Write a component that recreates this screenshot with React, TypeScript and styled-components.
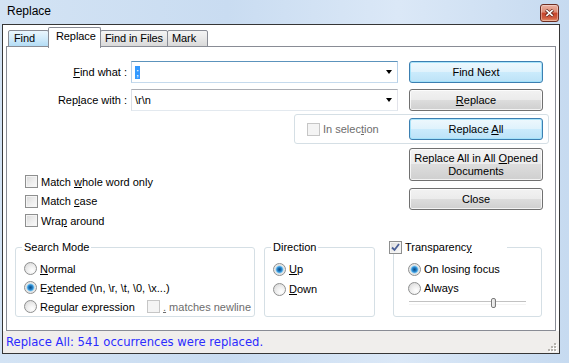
import React from 'react';
import styled, { createGlobalStyle } from 'styled-components';

const GlobalStyle = createGlobalStyle`
  html, body {
    margin: 0;
    padding: 0;
    background: #fff;
  }
  body {
    font-family: "Liberation Sans", Arial, sans-serif;
    font-size: 11px;
    color: #000;
  }
  * {
    box-sizing: border-box;
  }
`;

const Window = styled.div`
  width: 569px;
  height: 363px;
  display: flex;
  flex-direction: column;
  overflow: hidden;
  background: linear-gradient(90deg, #d3e3f4 0%, #c9dcf1 40%, #dbe8f7 70%, #c6daf0 100%);
`;

const TitleBar = styled.div`
  height: 24px;
  flex: none;
  display: flex;
  justify-content: space-between;
  padding: 0 10px 0 7px;
`;

const Title = styled.span`
  font-size: 12px;
  line-height: 23px;
  color: #000;
`;

const CloseButton = styled.div`
  width: 19px;
  height: 18px;
  margin-top: 4px;
  border: 1px solid #6d2e22;
  border-radius: 3px;
  display: flex;
  align-items: center;
  justify-content: center;
  background: linear-gradient(#eab1a2 0%, #dd8a73 45%, #c7442a 50%, #cf5b3e 80%, #e5946f 100%);
  box-shadow: inset 0 0 0 1px rgba(255, 255, 255, 0.35);
`;

const Client = styled.div`
  height: 330px;
  flex: none;
  margin: 0 9px 0 2px;
  border: 1px solid #363636;
  background: #fff;
  display: flex;
  flex-direction: column;
`;

const TabStrip = styled.div`
  height: 22px;
  flex: none;
  display: flex;
  align-items: flex-end;
  padding-left: 5px;
`;

const Tab = styled.div<{ $active?: boolean; $hover?: boolean; $w: number; $pad: number }>`
  position: relative;
  z-index: ${p => (p.$active ? 2 : 1)};
  width: ${p => p.$w}px;
  height: ${p => (p.$active ? 21 : 17)}px;
  margin-left: -1px;
  margin-bottom: ${p => (p.$active ? -1 : 0)}px;
  padding: ${p => (p.$active ? '2px' : '1px')} 0 0 ${p => p.$pad}px;
  border: 1px solid #898c95;
  border-bottom: ${p => (p.$active ? 'none' : '1px solid #898c95')};
  border-radius: 2px 2px 0 0;
  line-height: 13px;
  letter-spacing: -0.1px;
  white-space: nowrap;
  background: ${p =>
    p.$active
      ? '#fff'
      : p.$hover
        ? 'linear-gradient(#eaf6fd 0%, #cfe9f9 55%, #b3dcf5 100%)'
        : 'linear-gradient(#f4f4f4 0%, #e8e8e8 50%, #d9d9d9 100%)'};

  &:first-child {
    margin-left: 0;
  }
`;

const Panel = styled.div`
  width: 550px;
  height: 285px;
  flex: none;
  margin: -1px 0 0 3px;
  border: 1px solid #898c95;
  background: #fff;
  display: flex;
  flex-direction: column;
  padding-top: 14px;
`;

const FieldRow = styled.div<{ $top?: number }>`
  display: flex;
  align-items: center;
  height: 22px;
  margin-top: ${p => p.$top ?? 0}px;
`;

const FieldLabel = styled.span`
  width: 120px;
  text-align: right;
  white-space: nowrap;
`;

const Combo = styled.div<{ $focused?: boolean }>`
  width: 267px;
  height: 22px;
  margin-left: 4px;
  display: flex;
  align-items: center;
  padding-left: 3px;
  border: 1px solid;
  border-color: ${p =>
    p.$focused ? '#5c93bc #b5cfe7 #c5daed #b5cfe7' : '#abadb3 #e2e3ea #e3e9ef #dbdfe6'};
  background: #fff;
`;

const ComboText = styled.span`
  flex: 1;
  white-space: nowrap;
  line-height: 13px;
`;

const Selected = styled.span`
  display: inline-block;
  padding: 0 1px;
  background: #3399ff;
  color: #fff;
  line-height: 13px;
`;

const DropArrow = styled.span`
  width: 0;
  height: 0;
  margin-right: 5px;
  border-left: 3.5px solid transparent;
  border-right: 3.5px solid transparent;
  border-top: 4px solid #000;
`;

const PushButton = styled.div<{ $default?: boolean; $tall?: boolean; $left?: number }>`
  width: 134px;
  height: ${p => (p.$tall ? 33 : 22)}px;
  flex: none;
  margin-left: ${p => p.$left ?? 0}px;
  display: flex;
  align-items: center;
  justify-content: center;
  text-align: center;
  line-height: 13px;
  white-space: nowrap;
  border: 1px solid ${p => (p.$default ? '#3c7fb1' : '#707070')};
  border-radius: 3px;
  background: ${p =>
    p.$default
      ? 'linear-gradient(#eef8fd 0%, #dff2fc 50%, #cbebfc 50%, #bce2f7 100%)'
      : 'linear-gradient(#f2f2f2 0%, #ebebeb 50%, #dddddd 50%, #cfcfcf 100%)'};
  box-shadow: inset 0 0 0 1px ${p => (p.$default ? 'rgba(160, 225, 250, 0.9)' : 'rgba(255, 255, 255, 0.75)')};
`;

const SelectionFrame = styled.div`
  width: 255px;
  height: 30px;
  margin: 3px 0 0 287px;
  display: flex;
  align-items: center;
  padding: 0 5px 0 12px;
  border: 1px solid #d5dfe5;
  border-radius: 3px;
`;

const MiddleRow = styled.div`
  height: 99px;
  margin-top: 4px;
  display: flex;
`;

const OptionColumn = styled.div`
  width: 402px;
  padding: 24px 0 0 18px;
  display: flex;
  flex-direction: column;
`;

const ButtonColumn = styled.div`
  display: flex;
  flex-direction: column;
  gap: 7px;
`;

const Option = styled.div<{ $h?: number; $w?: number; $disabled?: boolean }>`
  height: ${p => p.$h ?? 19.5}px;
  width: ${p => (p.$w ? `${p.$w}px` : 'auto')};
  flex: none;
  display: flex;
  align-items: center;
  gap: 3px;
  white-space: nowrap;
  color: ${p => (p.$disabled ? '#6d6d6d' : '#000')};
`;

const CheckBox = styled.span<{ $disabled?: boolean }>`
  width: 13px;
  height: 13px;
  flex: none;
  display: inline-flex;
  align-items: center;
  justify-content: center;
  border: 1px solid ${p => (p.$disabled ? '#c6c6c6' : '#8e8f8f')};
  background: ${p =>
    p.$disabled ? '#f4f4f4' : 'linear-gradient(135deg, #d8d8d8 0%, #eeeeee 55%, #fbfbfb 100%)'};
  box-shadow: inset 0 0 0 1px #f4f4f4;
`;

const Radio = styled.span<{ $checked?: boolean }>`
  width: 13px;
  height: 13px;
  flex: none;
  border-radius: 50%;
  border: 1px solid #8e8f8f;
  background: ${p =>
    p.$checked
      ? 'radial-gradient(circle at 50% 50%, #0d4f86 0px, #1b6fb3 1.6px, #3d9ade 2.8px, #8fd0f3 3.6px, #e4e4e4 4.3px, #f7f7f7 100%)'
      : 'radial-gradient(circle at 65% 70%, #ffffff 0%, #eeeeee 45%, #d2d2d2 100%)'};
`;

const Key = styled.u`
  text-decoration: underline;
  text-underline-offset: 1px;
`;

const GroupRow = styled.div`
  display: flex;
  align-items: flex-start;
  padding-left: 8px;
`;

const GroupBox = styled.div<{ $w: number; $left?: number; $pt: number; $pl: number }>`
  position: relative;
  width: ${p => p.$w}px;
  height: 70px;
  margin-left: ${p => p.$left ?? 0}px;
  padding: ${p => p.$pt}px 0 0 ${p => p.$pl}px;
  border: 1px solid #d5dfe5;
  border-radius: 3px;
  display: flex;
  flex-direction: column;
`;

const Caption = styled.div<{ $left?: number; $w?: number }>`
  position: absolute;
  top: -7px;
  left: ${p => p.$left ?? 6}px;
  width: ${p => (p.$w ? `${p.$w}px` : 'auto')};
  height: 13px;
  padding: 0 2px;
  display: flex;
  align-items: center;
  gap: 3px;
  line-height: 13px;
  white-space: nowrap;
  background: #fff;
`;

const SliderTrack = styled.div`
  position: relative;
  width: 117px;
  height: 10px;
  margin-left: 1px;
  display: flex;
  align-items: center;

  &::before {
    content: '';
    width: 100%;
    height: 2px;
    border-top: 1px solid #c2c2c2;
    border-bottom: 1px solid #f4f4f4;
  }
`;

const SliderThumb = styled.span`
  position: absolute;
  top: 0;
  left: 82px;
  width: 5px;
  height: 10px;
  border: 1px solid #7a7a7a;
  border-radius: 2px;
  background: linear-gradient(90deg, #f4f4f4, #dcdcdc);
`;

const StatusBar = styled.div`
  height: 22px;
  flex: none;
  display: flex;
  align-items: center;
  justify-content: space-between;
  padding: 0 2px 0 3px;
  background: #f0eeec;
`;

const StatusText = styled.span`
  font-family: "DejaVu Sans", Verdana, sans-serif;
  font-size: 11.6px;
  color: #2b2bff;
  white-space: nowrap;
`;

const Grip = () => (
  <svg width="10" height="10" viewBox="0 0 10 10" style={{ alignSelf: 'flex-end', marginBottom: 1 }}>
    {[
      [7, 1], [7, 4], [4, 4], [7, 7], [4, 7], [1, 7],
    ].map(([x, y]) => (
      <g key={`${x}-${y}`}>
        <rect x={x + 1} y={y + 1} width="2" height="2" fill="#ffffff" />
        <rect x={x} y={y} width="2" height="2" fill="#b5b2ad" />
      </g>
    ))}
  </svg>
);

const Check = () => (
  <svg width="9" height="9" viewBox="0 0 9 9">
    <path d="M1 4.5 L3.5 7 L8 1" fill="none" stroke="#4a5f97" strokeWidth="1.8" />
  </svg>
);

export default function App() {
  return (
    <>
      <GlobalStyle />
      <Window>
        <TitleBar>
          <Title>Replace</Title>
          <CloseButton>
            <svg width="9" height="8" viewBox="0 0 9 8">
              <path d="M1 1 L8 7 M8 1 L1 7" stroke="#5a1f14" strokeWidth="3" />
              <path d="M1.3 1.2 L7.7 6.8 M7.7 1.2 L1.3 6.8" stroke="#fff" strokeWidth="1.6" />
            </svg>
          </CloseButton>
        </TitleBar>

        <Client>
          <TabStrip>
            <Tab $w={41} $pad={5} $hover>Find</Tab>
            <Tab $w={53} $pad={7} $active>Replace</Tab>
            <Tab $w={68} $pad={4}>Find in Files</Tab>
            <Tab $w={41} $pad={4}>Mark</Tab>
          </TabStrip>

          <Panel>
            <FieldRow>
              <FieldLabel>
                <Key>F</Key>ind what :
              </FieldLabel>
              <Combo $focused>
                <ComboText>
                  <Selected>;</Selected>
                </ComboText>
                <DropArrow />
              </Combo>
              <PushButton $default $left={11}>Find Next</PushButton>
            </FieldRow>

            <FieldRow $top={6}>
              <FieldLabel>
                Rep<Key>l</Key>ace with :
              </FieldLabel>
              <Combo>
                <ComboText>\r\n</ComboText>
                <DropArrow />
              </Combo>
              <PushButton $left={11}>
                <span>
                  <Key>R</Key>eplace
                </span>
              </PushButton>
            </FieldRow>

            <SelectionFrame>
              <Option $disabled>
                <CheckBox $disabled />
                <span>
                  In selec<Key>t</Key>ion
                </span>
              </Option>
              <PushButton $default style={{ marginLeft: 'auto' }}>
                <span>
                  Replace <Key>A</Key>ll
                </span>
              </PushButton>
            </SelectionFrame>

            <MiddleRow>
              <OptionColumn>
                <Option>
                  <CheckBox />
                  <span>
                    Match <Key>w</Key>hole word only
                  </span>
                </Option>
                <Option>
                  <CheckBox />
                  <span>
                    Match <Key>c</Key>ase
                  </span>
                </Option>
                <Option>
                  <CheckBox />
                  <span>
                    Wra<Key>p</Key> around
                  </span>
                </Option>
              </OptionColumn>
              <ButtonColumn>
                <PushButton $tall>
                  <span>
                    Replace All in All <Key>O</Key>pened
                    <br />
                    Documents
                  </span>
                </PushButton>
                <PushButton>Close</PushButton>
              </ButtonColumn>
            </MiddleRow>

            <GroupRow>
              <GroupBox $w={240} $pt={11} $pl={8}>
                <Caption>Search Mode</Caption>
                <Option $h={19}>
                  <Radio />
                  <span>
                    <Key>N</Key>ormal
                  </span>
                </Option>
                <Option $h={19}>
                  <Radio $checked />
                  <span>
                    E<Key>x</Key>tended (\n, \r, \t, \0, \x...)
                  </span>
                </Option>
                <FieldRow style={{ height: 19 }}>
                  <Option $h={19} $w={123}>
                    <Radio />
                    <span>
                      Re<Key>g</Key>ular expression
                    </span>
                  </Option>
                  <Option $h={19} $disabled>
                    <CheckBox $disabled />
                    <span>
                      <Key>.</Key> matches newline
                    </span>
                  </Option>
                </FieldRow>
              </GroupBox>

              <GroupBox $w={111} $left={9} $pt={11} $pl={8}>
                <Caption>Direction</Caption>
                <Option $h={20}>
                  <Radio $checked />
                  <span>
                    <Key>U</Key>p
                  </span>
                </Option>
                <Option $h={20}>
                  <Radio />
                  <span>
                    <Key>D</Key>own
                  </span>
                </Option>
              </GroupBox>

              <GroupBox $w={149} $left={18} $pt={11.5} $pl={14}>
                <Caption $left={-7} $w={120}>
                  <CheckBox>
                    <Check />
                  </CheckBox>
                  <span>
                    Transparenc<Key>y</Key>
                  </span>
                </Caption>
                <Option $h={19}>
                  <Radio $checked />
                  <span>On losing focus</span>
                </Option>
                <Option $h={19}>
                  <Radio />
                  <span>Always</span>
                </Option>
                <SliderTrack>
                  <SliderThumb />
                </SliderTrack>
              </GroupBox>
            </GroupRow>
          </Panel>

          <StatusBar>
            <StatusText>Replace All: 541 occurrences were replaced.</StatusText>
            <Grip />
          </StatusBar>
        </Client>
      </Window>
    </>
  );
}
